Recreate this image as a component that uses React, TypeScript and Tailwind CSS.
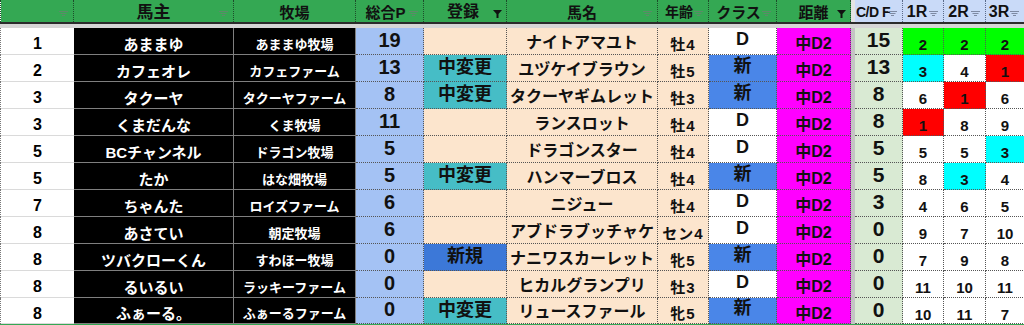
import type { ReactNode } from 'react'

const FONT = 'font-["Liberation_Sans","Noto_Sans_CJK_JP",sans-serif]'
const COLS =
  'grid grid-cols-[73px_160px_122px_68px_83px_151px_51px_68px_74px_4px_48px_41px_42px_39px]'

type Rank = 'g' | 'c' | 'r' | 'w'

type Row = {
  pos: number
  owner: string
  farm: string
  points: number
  reg: '' | '中変更' | '新規'
  horse: string
  age: string
  cls: 'D' | '新'
  dist: string
  cdf: number
  races: [number, number, number]
  marks?: [Rank, Rank, Rank]
}

const ROWS: Row[] = [
  { pos: 1, owner: 'あままゆ', farm: 'あままゆ牧場', points: 19, reg: '', horse: 'ナイトアマユト', age: '牡4', cls: 'D', dist: '中D2', cdf: 15, races: [2, 2, 2], marks: ['g', 'g', 'g'] },
  { pos: 2, owner: 'カフェオレ', farm: 'カフェファーム', points: 13, reg: '中変更', horse: 'ユヅケイブラウン', age: '牡5', cls: '新', dist: '中D2', cdf: 13, races: [3, 4, 1], marks: ['c', 'w', 'r'] },
  { pos: 3, owner: 'タクーヤ', farm: 'タクーヤファーム', points: 8, reg: '中変更', horse: 'タクーヤギムレット', age: '牡3', cls: '新', dist: '中D2', cdf: 8, races: [6, 1, 6], marks: ['w', 'r', 'w'] },
  { pos: 3, owner: 'くまだんな', farm: 'くま牧場', points: 11, reg: '', horse: 'ランスロット', age: '牡4', cls: 'D', dist: '中D2', cdf: 8, races: [1, 8, 9], marks: ['r', 'w', 'w'] },
  { pos: 5, owner: 'BCチャンネル', farm: 'ドラゴン牧場', points: 5, reg: '', horse: 'ドラゴンスター', age: '牡4', cls: 'D', dist: '中D2', cdf: 5, races: [5, 5, 3], marks: ['w', 'w', 'c'] },
  { pos: 5, owner: 'たか', farm: 'はな畑牧場', points: 5, reg: '中変更', horse: 'ハンマーブロス', age: '牡4', cls: '新', dist: '中D2', cdf: 5, races: [8, 3, 4], marks: ['w', 'c', 'w'] },
  { pos: 7, owner: 'ちゃんた', farm: 'ロイズファーム', points: 6, reg: '', horse: 'ニジュー', age: '牡4', cls: 'D', dist: '中D2', cdf: 3, races: [4, 6, 5] },
  { pos: 8, owner: 'あさてい', farm: '朝定牧場', points: 6, reg: '', horse: 'アブドラブッチャケ', age: 'セン4', cls: 'D', dist: '中D2', cdf: 0, races: [9, 7, 10] },
  { pos: 8, owner: 'ツバクローくん', farm: 'すわほー牧場', points: 0, reg: '新規', horse: 'ナニワスカーレット', age: '牝5', cls: '新', dist: '中D2', cdf: 0, races: [7, 9, 8] },
  { pos: 8, owner: 'るいるい', farm: 'ラッキーファーム', points: 0, reg: '', horse: 'ヒカルグランプリ', age: '牡3', cls: 'D', dist: '中D2', cdf: 0, races: [11, 10, 11] },
  { pos: 8, owner: 'ふぁーる。', farm: 'ふぁーるファーム', points: 0, reg: '中変更', horse: 'リュースファール', age: '牝5', cls: '新', dist: '中D2', cdf: 0, races: [10, 11, 7] },
]

const RANK_BG: Record<Rank, string> = {
  g: 'bg-[#00ff00]',
  c: 'bg-[#00ffff]',
  r: 'bg-[#ff0000]',
  w: 'bg-white',
}

function FilterIcon({ active, blue }: { active?: boolean; blue?: boolean }) {
  if (active) {
    return (
      <svg width="9" height="8" viewBox="0 0 9 8" className="absolute right-[4px] bottom-[4px]">
        <path d="M0 0H9L5.5 4V8H3.5V4Z" fill="#111" />
      </svg>
    )
  }
  return (
    <svg width="9" height="6" viewBox="0 0 9 6" className="absolute right-[5px] bottom-[5px]">
      <g stroke={blue ? '#7d8aa3' : '#5d8a69'} strokeWidth="1">
        <path d="M0 0.5H9" />
        <path d="M1.5 2.5H7.5" />
        <path d="M3 4.5H6" />
      </g>
    </svg>
  )
}

function Head({
  children,
  blue,
  filter = 'on',
  className = '',
}: {
  children?: ReactNode
  blue?: boolean
  filter?: 'on' | 'active' | 'none'
  className?: string
}) {
  return (
    <div
      className={`relative flex h-full items-center justify-center border-r border-dotted pt-[2px] leading-none font-bold whitespace-nowrap text-[#111] ${
        blue ? 'border-[#5b6b8a] bg-[#c9daf8]' : 'border-[#1d4d2a] bg-[#34a853]'
      } ${className}`}
    >
      {children}
      {filter !== 'none' && <FilterIcon active={filter === 'active'} blue={blue} />}
    </div>
  )
}

function Cell({ children, className = '' }: { children?: ReactNode; className?: string }) {
  return (
    <div
      className={`flex h-full items-center justify-center border-r border-b leading-none font-bold whitespace-nowrap ${className}`}
    >
      {children}
    </div>
  )
}

const DOT = 'border-dotted border-[#555]'

export default function App() {
  return (
    <div className={`h-[325px] w-[1024px] overflow-hidden bg-white ${FONT}`}>
      <div className={`${COLS} h-[22px] border-l border-dotted border-[#1d4d2a]`}>
        <Head />
        <Head className="text-[17px]">馬主</Head>
        <Head className="text-[15px]" filter="none">牧場</Head>
        <Head className="pr-2 text-[15px]">総合P</Head>
        <Head className="pr-1 text-[16px]" filter="active">登録</Head>
        <Head className="text-[15px]">馬名</Head>
        <Head className="pr-2 text-[14px]">年齢</Head>
        <Head className="pr-2 text-[15px]">クラス</Head>
        <Head className="text-[15px]" filter="active">距離</Head>
        <div className="h-full bg-[#e4e4e4]" />
        <Head blue className="justify-start pl-[1px] text-[14px] tracking-[-0.5px]">C/D F</Head>
        <Head blue className="pr-3 text-[16px]">1R</Head>
        <Head blue className="pr-3 text-[16px]">2R</Head>
        <Head blue className="pr-3 text-[16px]">3R</Head>
      </div>
      <div className="h-[2px] bg-[#2b2b2b]" />
      <div className="h-[4px] bg-[#d6d6d6]" />

      {ROWS.map((r, i) => {
        const last = i === ROWS.length - 1
        const marks = r.marks ?? ['w', 'w', 'w']
        return (
          <div
            key={i}
            className={`${COLS} border-l border-dotted border-[#777] ${last ? 'h-[26px]' : 'h-[27px]'}`}
          >
            <Cell className="border-r-0 border-[#dadada] bg-white pt-[6px] text-[16px] text-black">{r.pos}</Cell>
            <Cell className="border-[#7f7f7f] bg-black pt-[6px] text-[15px] text-white">{r.owner}</Cell>
            <Cell className="border-[#7f7f7f] bg-black pt-[6px] text-[13px] text-white">{r.farm}</Cell>
            <Cell className={`${DOT} bg-[#a4c2f4] pb-[3px] text-[20px] text-[#111]`}>{r.points}</Cell>
            <Cell
              className={`${DOT} pb-[2px] text-[18px] text-[#111] ${
                r.reg === '中変更' ? 'bg-[#46bdc6]' : r.reg === '新規' ? 'bg-[#3c78d8]' : 'bg-[#fce5cd]'
              }`}
            >
              {r.reg}
            </Cell>
            <Cell className={`${DOT} bg-[#fce5cd] pt-[3px] text-[16px] text-[#111]`}>{r.horse}</Cell>
            <Cell className={`${DOT} bg-[#fce5cd] pt-[6px] text-[15px] tracking-[1px] text-[#111]`}>{r.age}</Cell>
            <Cell
              className={`${DOT} pb-[5px] text-[18px] text-[#111] ${r.cls === '新' ? 'bg-[#4a86e8]' : 'bg-white'}`}
            >
              {r.cls}
            </Cell>
            <Cell className={`${DOT} bg-[#ff00ff] pt-[6px] text-[16px] text-[#111]`}>{r.dist}</Cell>
            <div className="h-full bg-[#c4c4c4]" />
            <Cell className={`${DOT} bg-[#d9ead3] pb-[3px] text-[21px] text-[#111]`}>{r.cdf}</Cell>
            {r.races.map((n, k) => (
              <Cell key={k} className={`${DOT} ${RANK_BG[marks[k]]} pt-[7px] text-[15px] text-[#111]`}>
                {n}
              </Cell>
            ))}
          </div>
        )
      })}
      <div className="h-[2px] bg-[#34a853]" />
    </div>
  )
}
